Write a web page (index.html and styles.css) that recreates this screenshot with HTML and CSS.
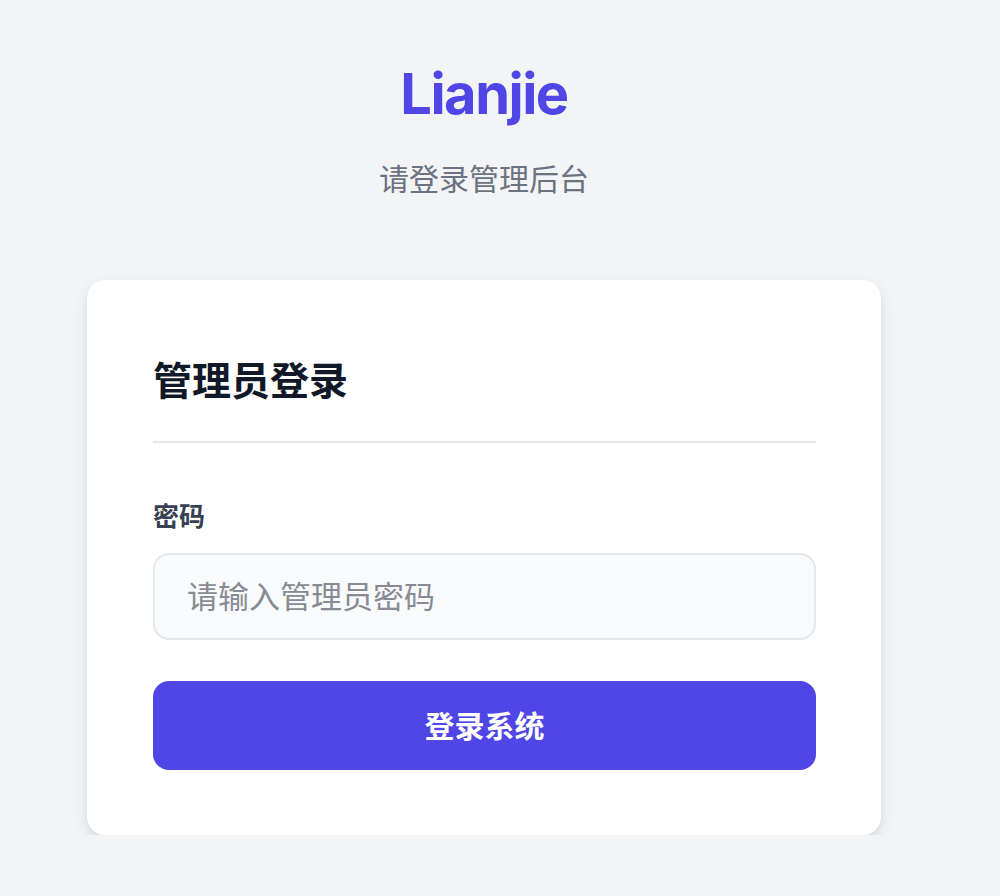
FILE: index.html
```html
<!DOCTYPE html>
<html lang="zh-CN">
<head>
    <meta charset="UTF-8">
    <meta name="viewport" content="width=device-width, initial-scale=1.0">
    <title>Lianjie 管理后台</title>
    <link rel="stylesheet" href="styles.css">
</head>
<body>
    <div class="page">
        <!-- Brand -->
        <header class="brand">
            <h1 class="logo">Lianjie</h1>
            <p class="subtitle">请登录管理后台</p>
        </header>

        <!-- Login card -->
        <div class="card">
            <h2 class="card-title">管理员登录</h2>
            <form class="login-form" id="loginForm">
                <div class="field">
                    <label for="password">密码</label>
                    <input type="password" id="password" placeholder="请输入管理员密码">
                </div>
                <button type="submit">登录系统</button>
            </form>
        </div>
    </div>
</body>
</html>
```

FILE: styles.css
```css
body {
    font-family: "Inter", "Noto Sans CJK SC", sans-serif;
    background-color: #f3f4f6;
    margin: 0;
    padding: 0;
}
.page {
    width: 794px;
    margin-left: 87px;
    padding-top: 61px;
}
.brand {
    text-align: center;
}
.logo {
    margin: 0;
    font-size: 56px;
    line-height: 66px;
    font-weight: 700;
    letter-spacing: -1.5px;
    color: #4f46e5;
}
.subtitle {
    margin: 32px 0 0;
    font-size: 30px;
    line-height: 40px;
    color: #6b7280;
}
.card {
    margin-top: 81px;
    background-color: #fff;
    border-radius: 18px;
    box-shadow: 0 6px 16px rgba(0, 0, 0, 0.09), 0 2px 4px rgba(0, 0, 0, 0.05);
    padding: 80px 65px 65px 66px;
}
.card-title {
    margin: 0;
    padding-bottom: 39px;
    border-bottom: 2px solid #e5e7eb;
    font-size: 39px;
    line-height: 42px;
    font-weight: 700;
    color: #111827;
}
.login-form {
    padding-top: 56px;
}
.field label {
    display: block;
    font-size: 26px;
    line-height: 36px;
    font-weight: 600;
    color: #374151;
}
.field input {
    display: block;
    width: 100%;
    height: 87px;
    margin-top: 18px;
    padding: 0 32px;
    border: 2px solid #e5e7eb;
    border-radius: 16px;
    background-color: #f9fafb;
    font-family: inherit;
    font-size: 31px;
    color: #111827;
    box-sizing: border-box;
}
.field input::placeholder {
    color: #878b93;
}
.field input:focus {
    outline: none;
    border-color: #4f46e5;
}
button {
    display: block;
    width: 100%;
    height: 89px;
    margin-top: 41px;
    padding: 0 0 4px;
    border: none;
    border-radius: 16px;
    background-color: #4f46e5;
    color: #fff;
    font-family: inherit;
    font-size: 30px;
    font-weight: 700;
    cursor: pointer;
}
button:hover {
    background-color: #4338ca;
}
```
